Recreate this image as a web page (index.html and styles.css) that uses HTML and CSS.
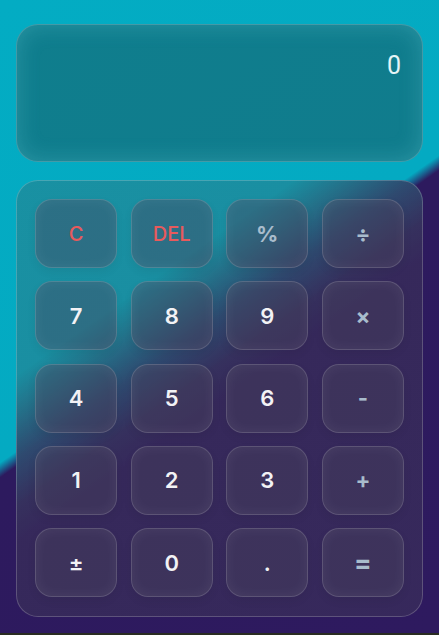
FILE: index.html
```html
<!DOCTYPE html>
<html lang="en">
<head>
<meta charset="utf-8">
<title>Calculator</title>
<link rel="stylesheet" href="styles.css">
</head>
<body>
<main class="app">
  <section class="display">
    <div class="display-value">0</div>
  </section>
  <section class="keypad">
    <button class="key key-fn">C</button>
    <button class="key key-fn">DEL</button>
    <button class="key key-op">%</button>
    <button class="key key-op">÷</button>
    <button class="key">7</button>
    <button class="key">8</button>
    <button class="key">9</button>
    <button class="key key-op">×</button>
    <button class="key">4</button>
    <button class="key">5</button>
    <button class="key">6</button>
    <button class="key key-op">-</button>
    <button class="key">1</button>
    <button class="key">2</button>
    <button class="key">3</button>
    <button class="key key-op">+</button>
    <button class="key">±</button>
    <button class="key">0</button>
    <button class="key">.</button>
    <button class="key key-op key-eq">=</button>
  </section>
</main>
</body>
</html>
```

FILE: styles.css
```css
* { box-sizing: border-box; }

html {
  background: #2a2c22;
  height: 100%;
}

body {
  margin: 0;
  font-family: "Inter", "Liberation Sans", sans-serif;
}

.app {
  height: 633px;
  background: linear-gradient(145deg, #03acc3 0%, #04aac2 49.2%, #2d1a5e 50.8%, #2e1a5f 100%);
  padding: 24px 16px 0 16px;
  display: flex;
  flex-direction: column;
  gap: 18px;
}

.display {
  height: 138px;
  border-radius: 22px;
  border: 1px solid rgba(255, 255, 255, 0.22);
  background: rgba(40, 45, 48, 0.36);
  box-shadow: inset 0 0 22px rgba(120, 220, 230, 0.25);
  padding: 26px 21px 0 0;
  display: flex;
  justify-content: flex-end;
  align-items: flex-start;
}

.display-value {
  font-family: "Roboto", "Liberation Sans", sans-serif;
  font-weight: 400;
  font-size: 25px;
  line-height: 30px;
  color: #e4f4f6;
}

.keypad {
  border-radius: 22px;
  border: 1px solid rgba(255, 255, 255, 0.2);
  background:
    linear-gradient(rgba(78, 78, 82, 0.28), rgba(78, 78, 82, 0.28)),
    linear-gradient(145deg, #03acc3 0%, #05a8c0 41%, #137f9f 45%, #22477a 50%, #2c2562 55%, #2d1a5e 59%, #2e1a5f 100%) fixed;
  padding: 18px 18px 19px 18px;
  display: grid;
  grid-template-columns: repeat(4, 1fr);
  grid-auto-rows: 69px;
  gap: 13.3px 13.3px;
}

.key {
  border: 1px solid rgba(255, 255, 255, 0.16);
  border-radius: 17px;
  background: rgba(72, 66, 92, 0.42);
  box-shadow: inset 0 0 14px rgba(255, 255, 255, 0.06), 0 4px 10px rgba(0, 0, 0, 0.06);
  color: #f2f2f5;
  font-family: "Inter", "Liberation Sans", sans-serif;
  font-size: 22px;
  font-weight: 600;
  padding: 0;
  display: flex;
  align-items: center;
  justify-content: center;
}

.key-fn {
  color: #e85a5c;
  font-size: 20px;
  font-weight: 500;
}

.key-op {
  color: #a8bccc;
  font-weight: 700;
}

.key-eq {
  font-size: 26px;
}
```
